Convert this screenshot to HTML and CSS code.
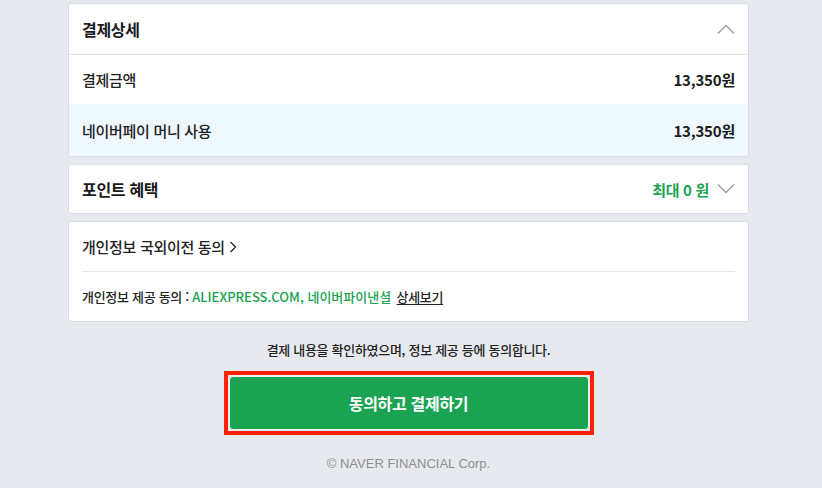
FILE: index.html
```html
<!DOCTYPE html>
<html lang="ko">
<head>
<meta charset="utf-8">
<link rel="stylesheet" href="styles.css">
</head>
<body>
<div class="page">
  <section class="card">
    <div class="row head">
      <span class="title">결제상세</span>
      <svg class="chev" width="18" height="10" viewBox="0 0 18 10"><path d="M1 9.5 L9 1.5 L17 9.5" fill="none" stroke="#9a9a9a" stroke-width="1.3"/></svg>
    </div>
    <div class="row line">
      <span class="label">결제금액</span>
      <span class="amount">13,350원</span>
    </div>
    <div class="row blue">
      <span class="label">네이버페이 머니 사용</span>
      <span class="amount">13,350원</span>
    </div>
  </section>

  <section class="card">
    <div class="row point">
      <span class="title">포인트 혜택</span>
      <span class="benefit">최대 0 원
        <svg class="chev" width="18" height="10" viewBox="0 0 18 10"><path d="M1 0.5 L9 8.5 L17 0.5" fill="none" stroke="#9a9a9a" stroke-width="1.3"/></svg>
      </span>
    </div>
  </section>

  <section class="card agree">
    <div class="arow top">
      <span class="label">개인정보 국외이전 동의</span>
      <svg class="gt" width="8" height="12" viewBox="0 0 8 12"><path d="M1.5 1 L6.5 6 L1.5 11" fill="none" stroke="#222" stroke-width="1.2"/></svg>
    </div>
    <div class="arow bottom">
      <span class="small">개인정보 제공 동의 : <span class="green">ALIEXPRESS.COM, 네이버파이낸셜</span> <a class="more">상세보기</a></span>
    </div>
  </section>

  <p class="notice">결제 내용을 확인하였으며, 정보 제공 등에 동의합니다.</p>

  <div class="btnwrap">
    <div class="highlight">
      <button class="pay">동의하고 결제하기</button>
    </div>
  </div>

  <p class="copy">© NAVER FINANCIAL Corp.</p>
</div>
</body>
</html>
```

FILE: styles.css
```css
* { box-sizing: border-box; }
html, body { margin: 0; padding: 0; }
body {
  background: #e6e9ee;
  font-family: "Noto Sans CJK KR", "Noto Sans", sans-serif;
  color: #1e1e1e;
  width: 822px;
  height: 488px;
  overflow: hidden;
}
.page {
  width: 681px;
  margin-left: 68px;
  padding-top: 3px;
  display: flex;
  flex-direction: column;
}
.card {
  background: #fff;
  border: 1px solid #d9dce1;
  border-radius: 3px;
  margin-bottom: 7px;
  overflow: hidden;
}
.row {
  display: flex;
  justify-content: space-between;
  align-items: center;
  padding: 0 13px;
  height: 50px;
}
.row.line { border-top: 1px solid #e3e5e8; }
.row.blue { background: #eef8fe; height: 52px; }
.row.point { height: 48px; }
.title {
  font-size: 16px;
  font-weight: 700;
  letter-spacing: -0.3px;
  color: #1b1b1b;
}
.label {
  font-size: 15px;
  font-weight: 500;
  letter-spacing: -0.3px;
  color: #222;
}
.amount {
  font-size: 15px;
  font-weight: 700;
  letter-spacing: -0.2px;
  color: #1b1b1b;
}
.chev { display: block; }
.benefit {
  display: flex;
  align-items: center;
  gap: 8px;
  color: #1aa251;
  font-size: 15px;
  font-weight: 700;
  letter-spacing: -0.3px;
}
.agree { padding: 0 13px; }
.arow {
  display: flex;
  align-items: center;
  height: 49px;
}
.arow.top { gap: 4px; }
.arow.bottom { border-top: 1px solid #e6e8eb; height: 50px; }
.small {
  font-size: 13px;
  font-weight: 500;
  letter-spacing: -0.3px;
  color: #222;
}
.green { color: #1aa251; letter-spacing: 0; }
.more {
  color: #222;
  text-decoration: underline;
  text-underline-offset: 2px;
  margin-left: 2px;
}
.notice {
  margin: 11px 0 0;
  text-align: center;
  font-size: 13px;
  font-weight: 500;
  letter-spacing: -0.3px;
  color: #222;
  line-height: 20px;
}
.btnwrap {
  display: flex;
  justify-content: center;
  margin-top: 11px;
}
.highlight {
  border: 4px solid #ff2200;
  padding: 1px;
  background: #e6e9ee;
}
.pay {
  display: block;
  width: 360px;
  height: 54px;
  background: #19a352;
  border: 1px solid #eef3f0;
  border-radius: 4px;
  color: #fff;
  font-family: "Noto Sans CJK KR", sans-serif;
  font-size: 16px;
  font-weight: 700;
  letter-spacing: -0.3px;
}
.copy {
  margin: 21px 0 0;
  text-align: center;
  font-family: "Liberation Sans", Arial, sans-serif;
  font-size: 13px;
  color: #8f8f8f;
}
```
